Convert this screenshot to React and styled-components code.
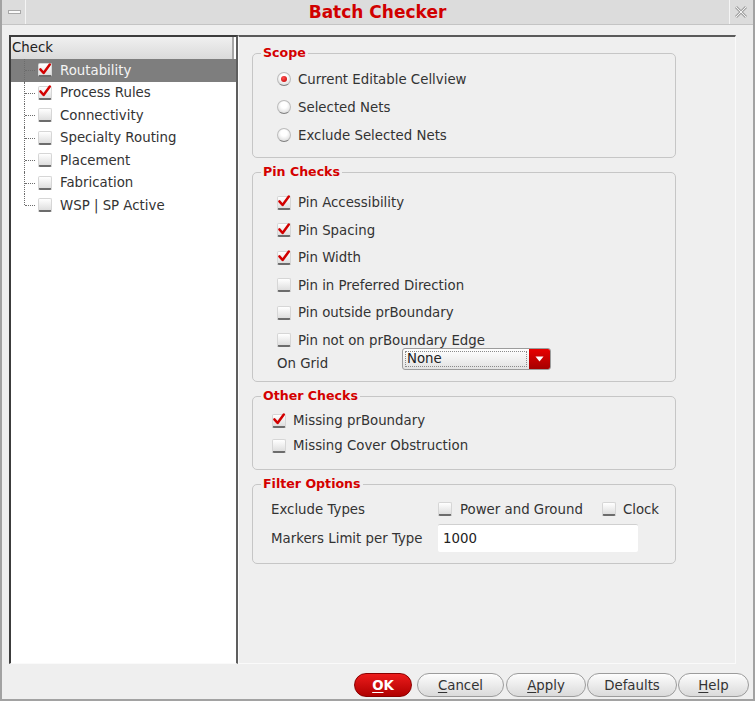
import React from "react";
import styled, { createGlobalStyle } from "styled-components";

const GlobalStyle = createGlobalStyle`
  html, body { margin: 0; padding: 0; background: #efefef; }
  body {
    font-family: "DejaVu Sans", "Liberation Sans", sans-serif;
    font-size: 13.33px;
    color: #333;
  }
`;

const Window = styled.div`
  width: 755px;
  height: 701px;
  box-sizing: border-box;
  border: 2px solid #a2a2a2;
  border-top: none;
  background: #efefef;
  display: flex;
  flex-direction: column;
`;

const TitleBar = styled.div`
  height: 25px;
  box-sizing: border-box;
  display: flex;
  align-items: stretch;
  background: #dcdcdc;
  border-bottom: 1px solid #c4c4c4;
`;

const TitleButton = styled.div`
  width: 24px;
  box-sizing: border-box;
  border-right: 1px solid ${(p) => (p.$right ? "#dcdcdc" : "#f4f4f4")};
  border-left: 1px solid ${(p) => (p.$right ? "#f4f4f4" : "#dcdcdc")};
  display: flex;
  align-items: center;
  justify-content: center;
`;

const MinusBar = styled.span`
  width: 13px;
  height: 4px;
  box-sizing: border-box;
  border: 1px solid #a8a8a8;
  background: #fafafa;
`;

const Title = styled.div`
  flex: 1;
  text-align: center;
  font-weight: bold;
  font-size: 17px;
  line-height: 24px;
  color: #d10000;
`;

const Body = styled.div`
  flex: 1;
  display: flex;
  flex-direction: column;
`;

const Main = styled.div`
  display: flex;
  padding: 10px 0 0 7px;
  height: 639px;
  box-sizing: border-box;
`;

const Tree = styled.div`
  width: 229px;
  height: 629px;
  box-sizing: border-box;
  background: #fff;
  border-top: 2px solid #3c3c3c;
  border-left: 2px solid #3c3c3c;
  border-right: 2px solid #5e5e5e;
  border-bottom: 1px solid #fafafa;
`;

const TreeHeader = styled.div`
  height: 22px;
  box-sizing: border-box;
  padding-left: 1px;
  line-height: 21px;
  color: #222;
  background: linear-gradient(#f0f0f0, #dadada);
  border-right: 2px solid #a6a6a6;
  margin-right: 2px;
`;

const TreeRow = styled.div`
  height: 22.5px;
  display: flex;
  align-items: center;
  padding-left: 13px;
  background: ${(p) => (p.$selected ? "#7e7e7e" : "transparent")};
  color: ${(p) => (p.$selected ? "#f4f4f4" : "#333")};
`;

const Branch = styled.span`
  position: relative;
  width: 12px;
  align-self: stretch;
  margin-right: 2px;
  flex: none;

  &::before {
    content: "";
    position: absolute;
    left: 0;
    top: 0;
    bottom: ${(p) => (p.$last ? "50%" : "0")};
    border-left: 1px dotted #6c6c6c;
  }
  &::after {
    content: "";
    position: absolute;
    left: 1px;
    width: 10px;
    top: 50%;
    border-top: 1px dotted #6c6c6c;
  }
`;

const Box = styled.span`
  width: 14px;
  height: 14px;
  box-sizing: border-box;
  flex: none;
  margin-left: ${(p) => p.$ml || 0}px;
  border: 1px solid #d6d6d6;
  border-bottom: 2px solid #6c6c6c;
  border-radius: 2px;
  background: linear-gradient(#ffffff, #dedede);
  display: inline-flex;
  align-items: center;
  justify-content: center;
  overflow: visible;
`;

const Radio = styled.span`
  width: 14px;
  height: 14px;
  box-sizing: border-box;
  flex: none;
  border-radius: 50%;
  border: 1px solid #bcbcbc;
  border-bottom-color: #7e7e7e;
  background: radial-gradient(circle at 50% 35%, #ffffff 30%, #d2d2d2 100%);
  display: inline-flex;
  align-items: center;
  justify-content: center;

  &::after {
    content: "";
    width: 6px;
    height: 6px;
    border-radius: 50%;
    background: radial-gradient(circle at 40% 35%, #ff5050, #c00000);
    display: ${(p) => (p.$on ? "block" : "none")};
  }
`;

const Label = styled.span`
  margin-left: ${(p) => p.$gap || 8}px;
  white-space: nowrap;
`;

const Panel = styled.div`
  width: 498px;
  height: 629px;
  box-sizing: border-box;
  border-top: 2px solid #5a5a5a;
  border-left: 1px solid #fafafa;
  border-right: 1px solid #fafafa;
  border-bottom: 1px solid #fafafa;
  padding: 0 0 0 13px;
  display: flex;
  flex-direction: column;
  gap: 6px;
`;

const Group = styled.fieldset`
  margin: 0;
  width: 424px;
  box-sizing: border-box;
  border: 1px solid #c6c6c6;
  border-radius: 5px;
  padding: ${(p) => p.$pad};
  min-inline-size: auto;

  &:first-child {
    margin-top: 8px;
  }
`;

const Legend = styled.legend`
  margin-left: 8px;
  padding: 0 2px;
  font-weight: bold;
  font-size: 12.6px;
  line-height: 16px;
  color: #d40000;
`;

const GroupBody = styled.div`
  padding-left: ${(p) => p.$indent}px;
`;

const Option = styled.div`
  height: ${(p) => p.$h}px;
  display: flex;
  align-items: center;
`;

const GridRow = styled.div`
  display: flex;
  align-items: flex-start;
  height: 22px;
  margin-top: -6px;
`;

const GridLabel = styled.span`
  width: 125px;
  padding-top: 8px;
  line-height: 16px;
`;

const Combo = styled.div`
  width: 149px;
  height: 22px;
  box-sizing: border-box;
  display: flex;
  border: 1px solid #9c9c9c;
  border-radius: 3px;
  background: linear-gradient(#ffffff, #e2e2e2);
  overflow: hidden;
`;

const ComboText = styled.div`
  flex: 1;
  margin: 2px;
  border: 1px dotted #8a8a8a;
  padding-left: 1px;
  line-height: 14px;
  color: #222;
`;

const ComboArrow = styled.div`
  width: 21px;
  background: linear-gradient(#e80000, #a40000);
  display: flex;
  align-items: center;
  justify-content: center;
`;

const FilterRow = styled.div`
  display: flex;
  align-items: center;
  height: ${(p) => p.$h}px;
  margin-top: ${(p) => p.$mt || 0}px;
`;

const FilterLabel = styled.span`
  width: 167px;
  flex: none;
`;

const TextField = styled.div`
  width: 200px;
  height: 28px;
  box-sizing: border-box;
  background: #fff;
  border-top: 1px solid #d0d0d0;
  border-radius: 2px;
  padding-left: 5px;
  line-height: 27px;
  color: #222;
`;

const ButtonBar = styled.div`
  flex: 1;
  display: flex;
  justify-content: flex-end;
  align-items: flex-start;
  padding: 9px 4px 0 0;
`;

const Button = styled.button`
  width: ${(p) => p.$w}px;
  margin-left: ${(p) => p.$ml || 1}px;
  height: 24px;
  border-radius: 12px;
  border: 1px solid ${(p) => (p.$primary ? "#8a0000" : "#9c9c9c")};
  background: ${(p) =>
    p.$primary
      ? "linear-gradient(#ec1c1c, #b00000)"
      : "linear-gradient(#fdfdfd, #dadada)"};
  color: ${(p) => (p.$primary ? "#fff" : "#333")};
  font-family: "DejaVu Sans", "Liberation Sans", sans-serif;
  font-size: 13.33px;
  font-weight: ${(p) => (p.$primary ? "bold" : "normal")};
  padding: 0;
  cursor: pointer;

  u {
    text-underline-offset: 2px;
  }
`;

const Check = () => (
  <svg width="14" height="14" viewBox="0 0 14 14" style={{ overflow: "visible" }}>
    <path
      d="M2.4 6.4 L5.6 10 L11.8 1.6"
      fill="none"
      stroke="#d20000"
      strokeWidth="2.5"
      strokeLinecap="round"
      strokeLinejoin="round"
    />
  </svg>
);

const CheckBox = ({ on, ml }) => <Box $ml={ml}>{on && <Check />}</Box>;

const treeItems = [
  { label: "Routability", on: true, selected: true },
  { label: "Process Rules", on: true },
  { label: "Connectivity" },
  { label: "Specialty Routing" },
  { label: "Placement" },
  { label: "Fabrication" },
  { label: "WSP | SP Active" },
];

const pinChecks = [
  { label: "Pin Accessibility", on: true },
  { label: "Pin Spacing", on: true },
  { label: "Pin Width", on: true },
  { label: "Pin in Preferred Direction" },
  { label: "Pin outside prBoundary" },
  { label: "Pin not on prBoundary Edge" },
];

const App = () => {
  return (
    <>
      <GlobalStyle />
      <Window>
        <TitleBar>
          <TitleButton>
            <MinusBar />
          </TitleButton>
          <Title>Batch Checker</Title>
          <TitleButton $right>
            <svg width="16" height="16" viewBox="0 0 16 16">
              <path d="M3 3 L13 13 M13 3 L3 13" stroke="#a6a6a6" strokeWidth="3" />
              <path d="M3 3 L13 13 M13 3 L3 13" stroke="#f2f2f2" strokeWidth="1" />
            </svg>
          </TitleButton>
        </TitleBar>
        <Body>
          <Main>
            <Tree>
              <TreeHeader>Check</TreeHeader>
              {treeItems.map((it, i) => (
                <TreeRow key={it.label} $selected={it.selected}>
                  <Branch $last={i === treeItems.length - 1} />
                  <CheckBox on={it.on} />
                  <Label>{it.label}</Label>
                </TreeRow>
              ))}
            </Tree>
            <Panel>
              <Group $pad="4px 0 8px 0">
                <Legend>Scope</Legend>
                <GroupBody $indent={24}>
                  <Option $h={28}>
                    <Radio $on />
                    <Label $gap={7}>Current Editable Cellview</Label>
                  </Option>
                  <Option $h={28}>
                    <Radio />
                    <Label $gap={7}>Selected Nets</Label>
                  </Option>
                  <Option $h={28}>
                    <Radio />
                    <Label $gap={7}>Exclude Selected Nets</Label>
                  </Option>
                </GroupBody>
              </Group>

              <Group $pad="9px 0 11px 0">
                <Legend>Pin Checks</Legend>
                <GroupBody $indent={24}>
                  {pinChecks.map((c) => (
                    <Option key={c.label} $h={27.5}>
                      <CheckBox on={c.on} />
                      <Label $gap={7}>{c.label}</Label>
                    </Option>
                  ))}
                  <GridRow>
                    <GridLabel>On Grid</GridLabel>
                    <Combo>
                      <ComboText>None</ComboText>
                      <ComboArrow>
                        <svg width="9" height="6" viewBox="0 0 9 6">
                          <path d="M0.5 0.5 L8.5 0.5 L4.5 5.5 Z" fill="#fff" />
                        </svg>
                      </ComboArrow>
                    </Combo>
                  </GridRow>
                </GroupBody>
              </Group>

              <Group $pad="4px 0 11px 0">
                <Legend>Other Checks</Legend>
                <GroupBody $indent={19}>
                  <Option $h={25}>
                    <CheckBox on />
                    <Label $gap={7}>Missing prBoundary</Label>
                  </Option>
                  <Option $h={25}>
                    <CheckBox />
                    <Label $gap={7}>Missing Cover Obstruction</Label>
                  </Option>
                </GroupBody>
              </Group>

              <Group $pad="5px 0 11px 0">
                <Legend>Filter Options</Legend>
                <GroupBody $indent={18}>
                  <FilterRow $h={24}>
                    <FilterLabel>Exclude Types</FilterLabel>
                    <CheckBox />
                    <Label $gap={8}>Power and Ground</Label>
                    <CheckBox ml={19} />
                    <Label $gap={7}>Clock</Label>
                  </FilterRow>
                  <FilterRow $h={28} $mt={3}>
                    <FilterLabel>Markers Limit per Type</FilterLabel>
                    <TextField>1000</TextField>
                  </FilterRow>
                </GroupBody>
              </Group>
            </Panel>
          </Main>
          <ButtonBar>
            <Button $primary $w={58}>
              <u>O</u>K
            </Button>
            <Button $w={87} $ml={5}>
              <u>C</u>ancel
            </Button>
            <Button $w={80} $ml={2}>
              <u>A</u>pply
            </Button>
            <Button $w={90}>Defaults</Button>
            <Button $w={71}>
              <u>H</u>elp
            </Button>
          </ButtonBar>
        </Body>
      </Window>
    </>
  );
};

export default App;
